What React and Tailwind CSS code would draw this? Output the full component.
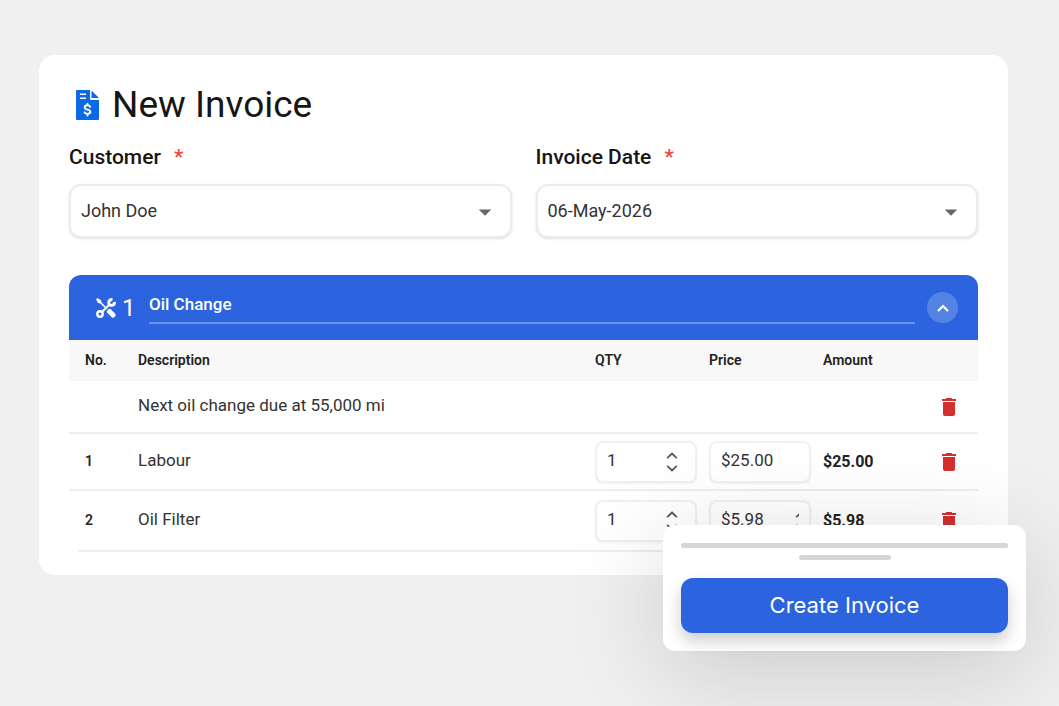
import React, { useState } from "react";
import { MdArrowDropDown, MdDelete } from "react-icons/md";

const initialItems = [
    { id: 1, name: "Labour", qty: "1", price: "$25.00", amount: "$25.00" },
    { id: 2, name: "Oil Filter", qty: "1", price: "$5.98", amount: "$5.98", stepper: true },
];

const InvoiceIcon = () => (
    <svg width="24" height="30" viewBox="0 0 24 30" aria-hidden="true">
        <path
            fill="#0b69e3"
            d="M1 0H14v8.500a1.500 1.500 0 0 0 1.500 1.500H23v19a1 1 0 0 1-1 1H1a1 1 0 0 1-1-1V1a1 1 0 0 1 1-1z"
        />
        <path fill="#0b69e3" d="M15.500 0.500l7.500 7.500h-7.500z" />
        <path stroke="#fff" strokeWidth="1.6" d="M4 4.200h6M4 8.300h6" />
        <path
            fill="none"
            stroke="#fff"
            strokeWidth="1.900"
            strokeLinecap="round"
            d="M14.200 16.800c-.5-1-1.400-1.500-2.700-1.500-1.700 0-2.800.8-2.800 2.100 0 2.900 5.700 1.400 5.700 4.400 0 1.300-1.100 2.100-2.900 2.100-1.400 0-2.400-.6-2.900-1.600M11.500 13.700v1.600M11.500 24v1.600"
        />
    </svg>
);

const ToolsIcon = () => (
    <svg width="20" height="20" viewBox="0 0 20 20" aria-hidden="true" fill="none" stroke="#fff">
        <path strokeWidth="1.6" d="M2.500 2.500l8 8" />
        <path fill="#fff" stroke="none" d="M0 1.500L1.500 0l3.500 2.200.4 2.400-1 .9-2.300-.5z" />
        <path strokeWidth="5" strokeLinecap="round" d="M13.500 13.500l3.500 3.500" />
        <path strokeWidth="2.200" d="M6 14l7.500-7.500" />
        <circle cx="4" cy="16" r="2.700" strokeWidth="2.400" />
        <path strokeWidth="2.900" d="M16.500 1.500c-2.500-.1-4.200 1.400-3.600 4 .3 1.200 1.800 2 3.100 1.800 1.700-.2 2.600-1.700 2.500-3.500" />
    </svg>
);

const StepperIcon = ({ half }) => (
    <svg
        width={half ? 4 : 12}
        height="20"
        viewBox={half ? "0 0 4 20" : "0 0 12 20"}
        aria-hidden="true"
        fill="none"
        stroke="#555"
        strokeWidth="1.800"
        className={half ? "mr-[10px] shrink-0" : "mr-[17px] shrink-0"}
    >
        <path d="M1.200 6.200L6 1.600l4.800 4.600M1.200 13.800L6 18.400l4.800-4.600" />
    </svg>
);

const SelectField = ({ id, label, value }) => (
    <div>
        <label htmlFor={id} className="block text-[21px] leading-6 font-medium text-[#161616]">
            {label} <span className="ml-2 text-[#f44336]">*</span>
        </label>
        <div className="relative mt-[15px]">
            <select
                id={id}
                defaultValue={value}
                className="block w-full h-[54px] appearance-none rounded-xl border-2 border-[#ececec] bg-white pl-[10px] pr-12 text-lg text-[#333] shadow-sm"
            >
                <option>{value}</option>
            </select>
            <MdArrowDropDown className="pointer-events-none absolute right-3 top-[13px] size-[30px] text-[#666]" />
        </div>
    </div>
);

const boxClass =
    "flex items-center h-[42px] w-[102px] rounded-lg border-2 border-[#f0f0f0] bg-white pl-[10px] shadow-xs";

const inputClass = "w-full min-w-0 pb-[2px] outline-none";

const LineItem = ({ item, onRemove }) => (
    <tr className="h-[57px] border-b-2 border-[#eee] last:h-[60px] last:border-b-0">
        <td className="pl-4 pb-[2px] text-sm font-semibold text-[#222]">{item.id}</td>
        <td className="pb-[2px]">{item.name}</td>
        <td>
            <div className={boxClass}>
                <input
                    aria-label={`${item.name} quantity`}
                    defaultValue={item.qty}
                    className={inputClass}
                />
                <StepperIcon />
            </div>
        </td>
        <td>
            <div className={boxClass}>
                <input
                    aria-label={`${item.name} price`}
                    defaultValue={item.price}
                    className={inputClass}
                />
                {item.stepper && <StepperIcon half />}
            </div>
        </td>
        <td className="text-base font-bold text-[#222]">{item.amount}</td>
        <td>
            <button
                type="button"
                aria-label={`Delete ${item.name}`}
                onClick={() => onRemove(item.id)}
                className="mx-auto block"
            >
                <MdDelete className="size-6 text-[#d32f2f]" />
            </button>
        </td>
    </tr>
);

const NewInvoicePage = () => {
    const [items, setItems] = useState(initialItems);
    const [open, setOpen] = useState(true);
    const [showNote, setShowNote] = useState(true);

    const removeItem = (id) => setItems(items.filter((item) => item.id !== id));

    return (
        <div className="min-h-screen overflow-hidden bg-[#f0f0f0] pt-[55px] pb-[130px] pl-[39px] pr-[51px] font-['Roboto',sans-serif]">
            <main className="relative rounded-2xl bg-white px-[30px] pt-7 pb-[23px]">
                <h1 className="flex items-center gap-3 pl-[7px] text-[37px] leading-11 text-[#161616]">
                    <InvoiceIcon />
                    New Invoice
                </h1>

                <div className="mt-[18px] grid grid-cols-2 gap-6">
                    <SelectField id="customer" label="Customer" value="John Doe" />
                    <SelectField id="date" label="Invoice Date" value="06-May-2026" />
                </div>

                <section className="mt-[37px]">
                    <div className="flex h-[65px] items-center rounded-t-xl bg-[#2b64de] pl-[27px] pr-5 text-white">
                        <ToolsIcon />
                        <span className="ml-1.5 w-[27px] text-2xl">1</span>
                        <input
                            aria-label="Service name"
                            defaultValue="Oil Change"
                            className="h-8 min-w-0 flex-1 border-b-2 border-white/30 pb-1.5 text-[17px] font-medium outline-none"
                        />
                        <button
                            type="button"
                            aria-label="Toggle service"
                            onClick={() => setOpen(!open)}
                            className="ml-3 flex size-[31px] items-center justify-center rounded-full bg-white/20"
                        >
                            <svg width="12" height="8" viewBox="0 0 12 8" fill="none" stroke="#fff" strokeWidth="2.200" aria-hidden="true">
                                <path d="M1 7l5-5 5 5" />
                            </svg>
                        </button>
                    </div>

                    {open && (
                        <>
                            <table className="w-full table-fixed border-collapse text-left text-[17px] text-[#333]">
                                <colgroup>
                                    <col className="w-[69px]" />
                                    <col />
                                    <col className="w-[114px]" />
                                    <col className="w-[114px]" />
                                    <col className="w-[97px]" />
                                    <col className="w-[58px]" />
                                </colgroup>
                                <thead>
                                    <tr className="h-[41px] bg-[#f8f8f8] text-sm text-[#222]">
                                        <th className="pl-4 pb-[2px] font-semibold">No.</th>
                                        <th className="pb-[2px] font-semibold">Description</th>
                                        <th className="pb-[2px] font-semibold">QTY</th>
                                        <th className="pb-[2px] font-semibold">Price</th>
                                        <th className="pb-[2px] font-semibold">Amount</th>
                                        <th aria-label="Actions"></th>
                                    </tr>
                                </thead>
                                <tbody>
                                    {showNote && (
                                        <tr className="h-[52px] border-b-2 border-[#eee]">
                                            <td></td>
                                            <td colSpan={4} className="pb-[2px]">Next oil change due at 55,000 mi</td>
                                            <td>
                                                <button
                                                    type="button"
                                                    aria-label="Delete note"
                                                    onClick={() => setShowNote(false)}
                                                    className="mx-auto block"
                                                >
                                                    <MdDelete className="size-6 text-[#d32f2f]" />
                                                </button>
                                            </td>
                                        </tr>
                                    )}
                                    {items.map((item) => (
                                        <LineItem key={item.id} item={item} onRemove={removeItem} />
                                    ))}
                                </tbody>
                            </table>
                            <div className="ml-[9px] border-b-2 border-[#eee]" />
                        </>
                    )}
                </section>

                <div className="absolute -right-[18px] -bottom-[76px] w-[363px] rounded-xl bg-white p-[18px] shadow-[0_20px_100px_rgba(0,0,0,0.16)]">
                    <div className="h-[5px] rounded-full bg-[#d6d6d6]" />
                    <div className="mx-auto mt-[7px] h-[5px] w-[92px] rounded-full bg-[#d6d6d6]" />
                    <button
                        type="button"
                        className="mt-[18px] block h-[55px] w-full rounded-xl bg-[#2b64de] font-['Inter',sans-serif] text-[22px] text-white shadow-[0_8px_16px_rgba(0,0,0,0.2)]"
                    >
                        Create Invoice
                    </button>
                </div>
            </main>
        </div>
    );
};

export default NewInvoicePage;
